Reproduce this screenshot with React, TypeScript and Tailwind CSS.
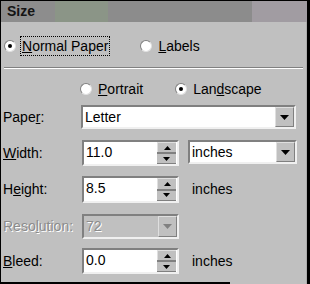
import React from "react";

const font = "font-['Liberation_Sans',Arial,sans-serif]";

const Radio = ({ checked }: { checked?: boolean }) => (
  <div className="w-[12px] h-[12px] rounded-full bg-white border border-t-[#808080] border-l-[#808080] border-b-[#e0e0e0] border-r-[#e0e0e0] flex items-center justify-center shrink-0">
    {checked && <div className="w-[4px] h-[4px] rounded-full bg-black" />}
  </div>
);

const Arrow = ({ up, gray, wide }: { up?: boolean; gray?: boolean; wide?: boolean }) => {
  const w = wide ? 9 : 7;
  const h = wide ? 5 : 4;
  return (
    <svg width={w} height={h} viewBox={`0 0 ${w} ${h}`}>
      <polygon
        points={up ? `${w / 2},0 ${w},${h} 0,${h}` : `0,0 ${w},0 ${w / 2},${h}`}
        fill={gray ? "#808080" : "#000"}
      />
    </svg>
  );
};

const DropButton = ({ gray }: { gray?: boolean }) => (
  <div className="w-[19px] shrink-0 bg-[#c0c0c0] border border-t-[#dfdfdf] border-l-[#dfdfdf] border-b-[#808080] border-r-[#808080] flex items-center justify-center">
    <Arrow gray={gray} wide />
  </div>
);

const Sunken = ({
  className,
  children,
}: {
  className: string;
  children: React.ReactNode;
}) => (
  <div
    className={`border-2 border-t-[#808080] border-l-[#808080] border-b-[#f0f0f0] border-r-[#f0f0f0] flex shrink-0 ${className}`}
  >
    {children}
  </div>
);

const Spin = ({ value }: { value: string }) => (
  <Sunken className="w-[97px] h-full bg-white">
    <div className="flex-1 px-[2px] pt-[2px] leading-[16px]">{value}</div>
    <div className="w-[19px] flex flex-col bg-[#c0c0c0] mr-[1px]">
      <div className="flex-1 flex items-center justify-center border-t border-l border-[#dfdfdf]">
        <Arrow up />
      </div>
      <div className="h-[2px] bg-[#808080]" />
      <div className="flex-1 flex items-center justify-center border-b border-[#808080]">
        <Arrow />
      </div>
    </div>
  </Sunken>
);

const row = "grid grid-cols-[79px_97px_1fr] items-center pl-[2px] shrink-0";

export default function App() {
  return (
    <div
      className={`${font} w-[310px] h-[284px] bg-[#c0c0c0] border-l border-t border-black border-r-[3px] flex flex-col text-[14px] text-black overflow-hidden`}
    >
      <div className="h-[21px] shrink-0 bg-[linear-gradient(to_right,#8d8d8d_54px,#8b9587_54px,#8b9587_107px,#8c8c8c_107px,#8c8c8c_251px,#a19ca2_251px)] pl-[6px] flex items-center font-bold text-[#141414] text-[14px]">
        Size
      </div>
      <div className="flex-1 flex flex-col border-r border-[#acacac]">
        <div className="h-[20px] mt-[14px] flex items-center pl-[3px] shrink-0">
          <Radio checked />
          <div className="ml-[4px] px-[1px] h-[20px] flex items-center border border-dotted border-black">
            <span>
              <u>N</u>ormal Paper
            </span>
          </div>
          <div className="ml-[30px]">
            <Radio />
          </div>
          <span className="ml-[6px]">
            <u>L</u>abels
          </span>
        </div>
        <div className="mt-[11px] mx-[3px] h-[2px] shrink-0 border-t border-[#808080] border-b border-b-white" />
        <div className="h-[20px] mt-[10px] flex items-center pl-[79px] shrink-0">
          <Radio />
          <span className="ml-[6px]">
            <u>P</u>ortrait
          </span>
          <div className="ml-[32px]">
            <Radio checked />
          </div>
          <span className="ml-[6px]">
            Lan<u>d</u>scape
          </span>
        </div>
        <div className="h-[24px] mt-[6px] flex items-center pl-[2px] shrink-0">
          <span className="w-[78px] shrink-0">
            Pape<u>r</u>:
          </span>
          <Sunken className="w-[215px] h-full bg-white items-stretch">
            <div className="flex-1 pl-[2px] flex items-center">Letter</div>
            <DropButton />
          </Sunken>
        </div>
        <div className={`${row} h-[26px] mt-[11px]`}>
          <span>
            <u>W</u>idth:
          </span>
          <Spin value="11.0" />
          <Sunken className="ml-[9px] w-[109px] h-[24px] self-start bg-white items-stretch">
            <div className="flex-1 pl-[2px] flex items-center">inches</div>
            <DropButton />
          </Sunken>
        </div>
        <div className={`${row} h-[27px] mt-[10px]`}>
          <span>
            H<u>e</u>ight:
          </span>
          <Spin value="8.5" />
          <div className="ml-[9px] pl-[4px]">inches</div>
        </div>
        <div className={`${row} h-[24px] mt-[11px] text-[#8c8c8c] [text-shadow:1px_1px_0_#ffffff]`}>
          <span>
            Reso<u>l</u>ution:
          </span>
          <Sunken className="w-[97px] h-full bg-[#c0c0c0] items-stretch">
            <div className="flex-1 pl-[2px] flex items-center">72</div>
            <DropButton gray />
          </Sunken>
        </div>
        <div className={`${row} h-[26px] mt-[10px]`}>
          <span>
            <u>B</u>leed:
          </span>
          <Spin value="0.0" />
          <div className="ml-[9px] pl-[4px]">inches</div>
        </div>
        <div className="mt-auto w-[229px] h-[2px] shrink-0 bg-black" />
      </div>
    </div>
  );
}
